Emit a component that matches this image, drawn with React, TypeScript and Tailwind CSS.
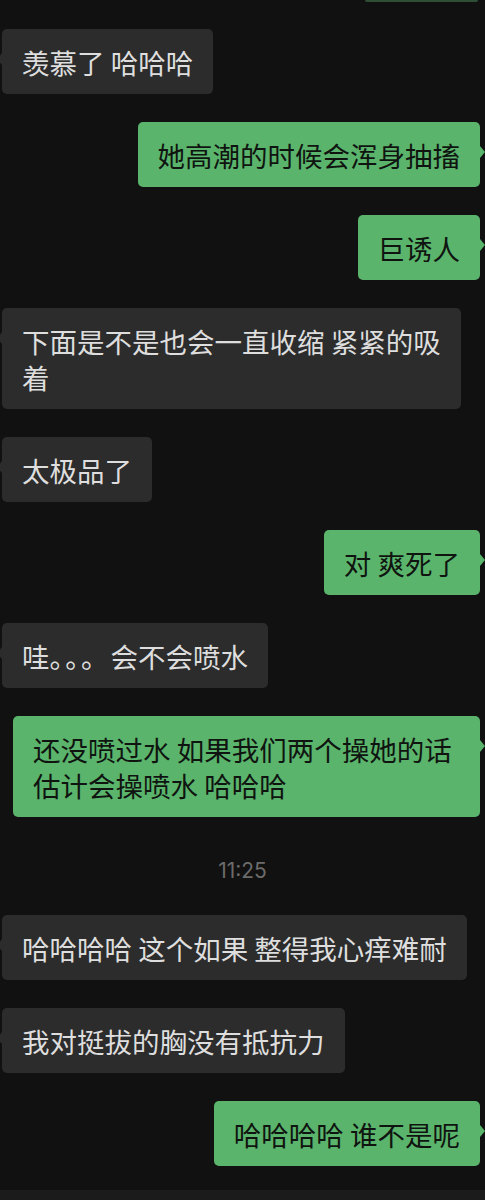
import React from 'react';

type Msg =
  | { kind: 'in' | 'out'; lines: React.ReactNode[]; wrap?: boolean }
  | { kind: 'time'; text: string };

const messages: Msg[] = [
  { kind: 'in', lines: ['羡慕了 哈哈哈'] },
  { kind: 'out', lines: ['她高潮的时候会浑身抽搐'] },
  { kind: 'out', lines: ['巨诱人'] },
  { kind: 'in', lines: ['下面是不是也会一直收缩 紧紧的吸', '着'] },
  { kind: 'in', lines: ['太极品了'] },
  { kind: 'out', lines: ['对 爽死了'] },
  {
    kind: 'in',
    lines: [
      <>
        哇<span className="tracking-[2px]">。。。</span>会不会喷水
      </>,
    ],
  },
  { kind: 'out', lines: ['还没喷过水 如果我们两个操她的话估计会操喷水 哈哈哈'], wrap: true },
  { kind: 'time', text: '11:25' },
  { kind: 'in', lines: ['哈哈哈哈 这个如果 整得我心痒难耐'] },
  { kind: 'in', lines: ['我对挺拔的胸没有抵抗力'] },
  { kind: 'out', lines: ['哈哈哈哈 谁不是呢'] },
];

function Bubble({ kind, lines, wrap }: { kind: 'in' | 'out'; lines: React.ReactNode[]; wrap?: boolean }) {
  const isOut = kind === 'out';
  return (
    <div className={isOut ? 'self-end mr-[5px] relative' : 'self-start ml-[2px] relative'}>
      {/* little tail */}
      {isOut ? (
        <div className="absolute top-[24px] -right-[5px] w-0 h-0 border-y-[6px] border-y-transparent border-l-[5px] border-l-[#5ab46c]" />
      ) : (
        <div className="absolute top-[24px] -left-[5px] w-0 h-0 border-y-[6px] border-y-transparent border-r-[5px] border-r-[#2c2c2c]" />
      )}
      <div
        className={`rounded-[5px] px-[20px] py-[14.5px] text-[27.5px] leading-[36px] max-w-[467px] ${
          wrap ? 'break-all' : 'whitespace-nowrap'
        } ${isOut ? 'bg-[#5ab46c] text-[#101410]' : 'bg-[#2c2c2c] text-[#dedede]'}`}
      >
        {lines.map((l, i) => (
          <React.Fragment key={i}>
            {i > 0 && <br />}
            {l}
          </React.Fragment>
        ))}
      </div>
    </div>
  );
}

export default function App() {
  return (
    <div className="w-[485px] h-[1200px] bg-[#111111] overflow-hidden flex flex-col font-['Noto_Sans_CJK_SC',sans-serif]">
      {/* bottom edge of the bubble above */}
      <div className="self-end mr-[7px] w-[113px] h-[2px] bg-[#2e4f35] rounded-b-[2px]" />

      <div className="flex flex-col gap-[28px] mt-[27px]">
        {messages.map((m, i) =>
          m.kind === 'time' ? (
            <div
              key={i}
              className="h-[42px] pt-[14px] text-center text-[21px] leading-[24px] text-[#6b6b6b] font-['Inter',sans-serif]"
            >
              {m.text}
            </div>
          ) : (
            <Bubble key={i} kind={m.kind} lines={m.lines} wrap={m.wrap} />
          )
        )}
      </div>

      {/* input bar edge */}
      <div className="mt-auto h-[10px] bg-[#1b1b1b]" />
    </div>
  );
}
